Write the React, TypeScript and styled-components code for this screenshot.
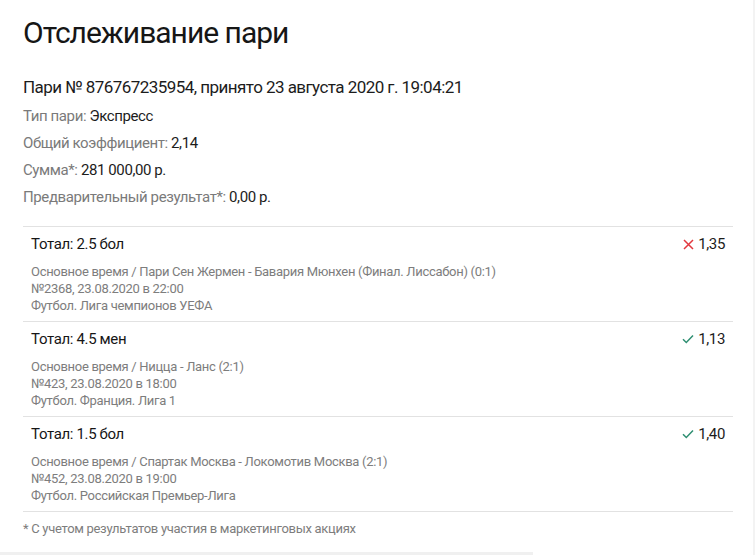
import styled, { createGlobalStyle } from 'styled-components';

type Outcome = 'lost' | 'won';

const SUMMARY = [
    { label: 'Тип пари', value: 'Экспресс' },
    { label: 'Общий коэффициент', value: '2,14' },
    { label: 'Сумма*', value: '281 000,00 р.' },
    { label: 'Предварительный результат*', value: '0,00 р.' },
];

const EVENTS: {
    market: string;
    odds: string;
    outcome: Outcome;
    match: string;
    when: string;
    league: string;
}[] = [
    {
        market: 'Тотал: 2.5 бол',
        odds: '1,35',
        outcome: 'lost',
        match: 'Основное время / Пари Сен Жермен - Бавария Мюнхен (Финал. Лиссабон) (0:1)',
        when: '№2368, 23.08.2020 в 22:00',
        league: 'Футбол. Лига чемпионов УЕФА',
    },
    {
        market: 'Тотал: 4.5 мен',
        odds: '1,13',
        outcome: 'won',
        match: 'Основное время / Ницца - Ланс (2:1)',
        when: '№423, 23.08.2020 в 18:00',
        league: 'Футбол. Франция. Лига 1',
    },
    {
        market: 'Тотал: 1.5 бол',
        odds: '1,40',
        outcome: 'won',
        match: 'Основное время / Спартак Москва - Локомотив Москва (2:1)',
        when: '№452, 23.08.2020 в 19:00',
        league: 'Футбол. Российская Премьер-Лига',
    },
];

function OutcomeIcon({ outcome }: { outcome: Outcome }) {
    if (outcome === 'lost') {
        return (
            <svg width="11" height="11" viewBox="0 0 11 11" fill="none" stroke="#e2383f" strokeWidth="1.5">
                <path d="M1 1l9 9M10 1l-9 9" />
            </svg>
        );
    }
    return (
        <svg width="12" height="10" viewBox="0 0 12 10" fill="none" stroke="#2f8f72" strokeWidth="1.5">
            <path d="M1 5.2l3.3 3.3L11 1.5" />
        </svg>
    );
}

export default function App() {
    return (
        <>
            <GlobalStyle />
            <Page>
                <Title>Отслеживание пари</Title>
                <BetHeader>Пари № 876767235954, принято 23 августа 2020 г. 19:04:21</BetHeader>
                <Summary>
                    {SUMMARY.map((item) => (
                        <SummaryRow key={item.label}>
                            <Label>{item.label}: </Label>
                            <span>{item.value}</span>
                        </SummaryRow>
                    ))}
                </Summary>
                <EventList>
                    {EVENTS.map((ev) => (
                        <EventRow key={ev.when}>
                            <EventTop>
                                <Market>{ev.market}</Market>
                                <Odds>
                                    <OutcomeIcon outcome={ev.outcome} />
                                    {ev.odds}
                                </Odds>
                            </EventTop>
                            <Details>
                                <div>{ev.match}</div>
                                <div>{ev.when}</div>
                                <div>{ev.league}</div>
                            </Details>
                        </EventRow>
                    ))}
                </EventList>
                <Footnote>* С учетом результатов участия в маркетинговых акциях</Footnote>
            </Page>
            <BottomBar />
        </>
    );
}

const GlobalStyle = createGlobalStyle`
    html, body {
        margin: 0;
        padding: 0;
        background: #fff;
        height: 555px;
        overflow: hidden;
    }
    body {
        font-family: Roboto, "Noto Sans", sans-serif;
        color: #1c1c1c;
        border-right: 2px solid #f3f3f3;
        box-sizing: border-box;
        width: 755px;
    }
`;

const Page = styled.div`
    display: flex;
    flex-direction: column;
    padding: 15px 20px 0 23px;
    height: 537px;
`;

const Title = styled.h1`
    margin: 0;
    font-size: 30px;
    font-weight: 400;
    line-height: 36px;
    letter-spacing: -1px;
    color: #161616;
`;

const BetHeader = styled.div`
    margin-top: 24px;
    font-size: 17px;
    line-height: 24px;
    letter-spacing: -0.55px;
`;

const Summary = styled.div`
    display: flex;
    flex-direction: column;
    margin-top: 4px;
    margin-bottom: 15px;
`;

const SummaryRow = styled.div`
    font-size: 15px;
    line-height: 27px;
    letter-spacing: -0.4px;
`;

const Label = styled.span`
    color: #7a7a7a;
`;

const EventList = styled.div`
    display: flex;
    flex-direction: column;
    width: 710px;
    border-bottom: 1px solid #e2e2e2;
`;

const EventRow = styled.div`
    display: flex;
    flex-direction: column;
    gap: 9px;
    padding: 7px 8px 7px 8px;
    border-top: 1px solid #e2e2e2;
`;

const EventTop = styled.div`
    display: flex;
    justify-content: space-between;
    align-items: center;
    font-size: 15px;
    line-height: 20px;
    letter-spacing: -0.35px;
`;

const Market = styled.span`
    color: #161616;
`;

const Odds = styled.span`
    display: flex;
    align-items: center;
    gap: 4px;
`;

const Details = styled.div`
    display: flex;
    flex-direction: column;
    font-size: 13px;
    line-height: 17px;
    letter-spacing: -0.3px;
    color: #7d7d7d;
`;

const Footnote = styled.div`
    margin-top: 8px;
    font-size: 13px;
    line-height: 17px;
    letter-spacing: -0.3px;
    color: #7d7d7d;
`;

const BottomBar = styled.div`
    width: 533px;
    height: 3px;
    background: #f0f0f0;
`;
